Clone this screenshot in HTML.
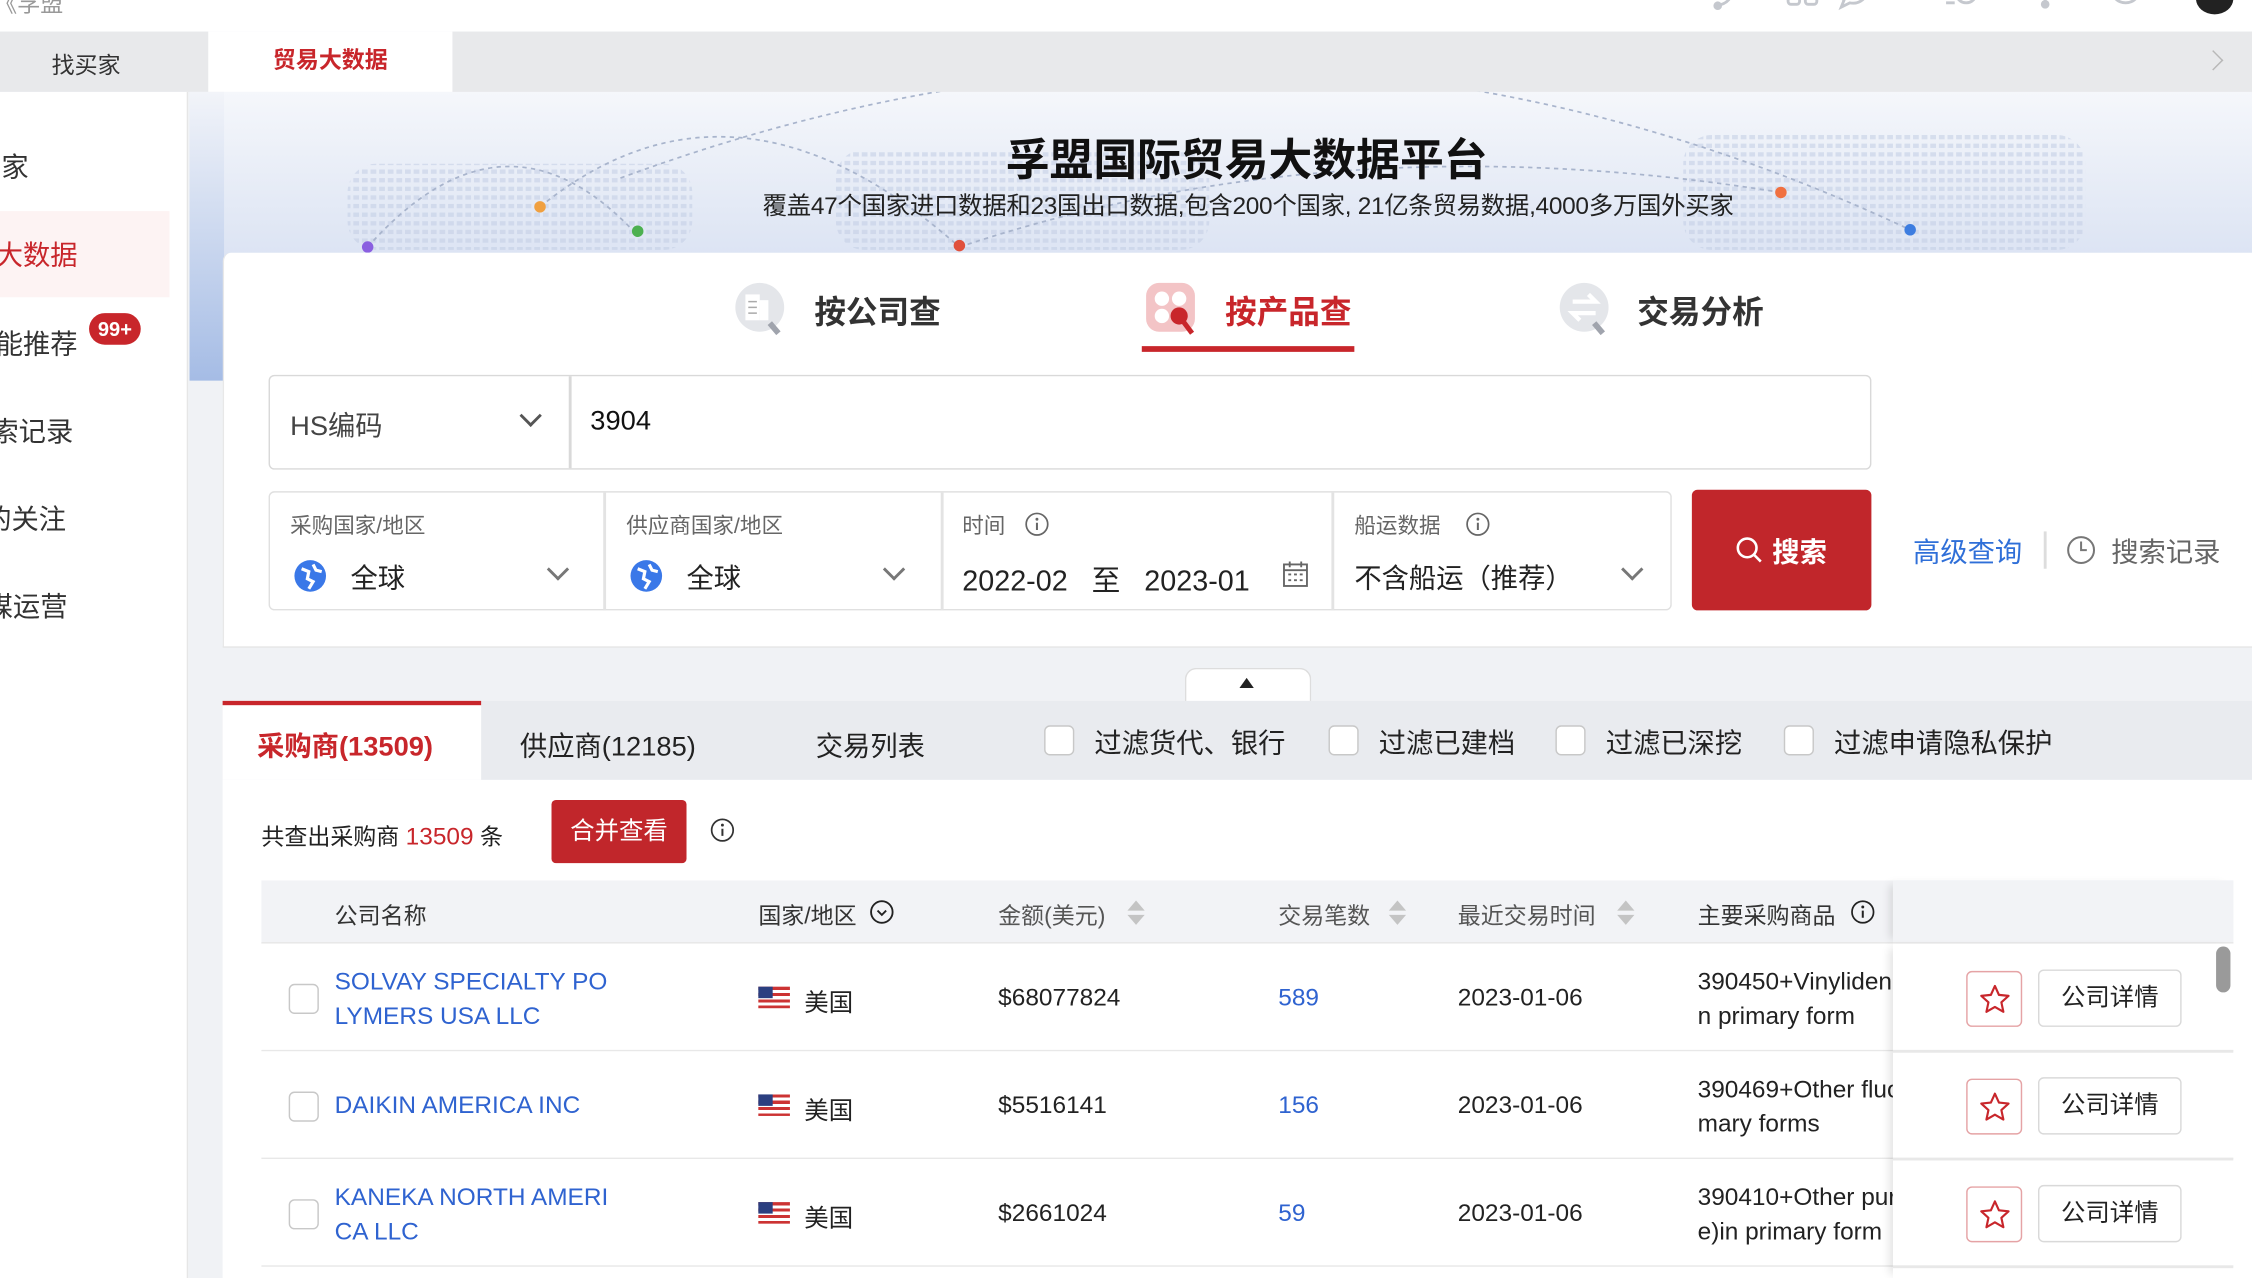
<!DOCTYPE html>
<html><head><meta charset="utf-8">
<style>
*{margin:0;padding:0;box-sizing:border-box}
html,body{width:2252px;height:1278px;overflow:hidden;background:#fff}
#s{position:absolute;left:0;top:0;width:1568px;height:890px;transform:scale(1.43622);transform-origin:0 0;font-family:"Liberation Sans","Noto Sans CJK SC",sans-serif;color:#222;overflow:hidden;background:#f0f2f5}
.a{position:absolute;white-space:nowrap}
.chk{position:absolute;width:21px;height:21px;border:1.5px solid #c8c8c8;border-radius:4px;background:#fff}
.lbl{font-size:15px;color:#666}
.val{font-size:19px;color:#222}
.chev{position:absolute;width:11px;height:11px;border-right:2px solid #555;border-bottom:2px solid #555;transform:rotate(45deg)}
.th{font-size:16px;color:#333;top:626px}
.sort{position:absolute;width:0;height:0;border-left:6px solid transparent;border-right:6px solid transparent}
.row{position:absolute;left:182px;width:1373px;height:75px;background:#fff;border-bottom:1.5px solid #e8e8e8}
.td{font-size:17px;color:#222}
.blue{color:#2f63d0}
.star{position:absolute;width:39px;height:39px;border:1.5px solid #e5a3a5;border-radius:4px;background:#fff}
.det{position:absolute;width:100px;height:40px;border:1.5px solid #d9d9d9;border-radius:4px;background:#fff;font-size:17px;text-align:center;line-height:37px;color:#222}
.flag{position:absolute;width:22px;height:15px;background:repeating-linear-gradient(#c33 0 2.2px,#fff 2.2px 4.4px)}
.flag:before{content:"";position:absolute;left:0;top:0;width:10px;height:8px;background:#2b3f80}
.sb{font-size:19px;color:#333;position:absolute;white-space:nowrap}
</style></head><body><div id="s">

<!-- top bar -->
<div class="a" style="left:0;top:0;width:1568px;height:22px;background:#fff"></div>
<div class="a" style="left:-4px;top:-11px;font-size:16px;color:#999">《孚盟</div>
<svg class="a" style="left:1190px;top:-8px" width="370" height="20" fill="none" stroke="#c5c8ce" stroke-width="2">
<path d="M15 0 q2 10 -10 12"/><circle cx="6" cy="12" r="2" fill="#c5c8ce"/>
<rect x="55" y="-4" width="8" height="15" rx="2"/><rect x="67" y="-4" width="8" height="15" rx="2"/>
<path d="M110 0 a10 9 0 1 0 -16 8 l-2 5 l6 -3 a10 9 0 0 0 12 -10"/>
<path d="M165 10 h6 M172 3 a7 7 0 1 0 14 0"/>
<path d="M225 5 h18 M234 5 v4"/><circle cx="234" cy="11" r="2" fill="#c5c8ce"/>
<circle cx="290" cy="0" r="10"/><path d="M290 0 v6"/>
</svg>
<div class="a" style="left:1529px;top:-12px;width:26px;height:22px;border-radius:50%;background:#222"></div>

<!-- tab bar -->
<div class="a" style="left:0;top:22px;width:1568px;height:42px;background:#e8e9eb"></div>
<div class="a" style="left:0;top:32px;width:120px;text-align:center;font-size:16px;color:#333">找买家</div>
<div class="a" style="left:145px;top:22px;width:170px;height:42px;background:#fff;text-align:center;line-height:42px;font-size:16px;font-weight:bold;color:#c8262b">贸易大数据</div>
<div class="a" style="left:1536px;top:37px;width:10px;height:10px;border-right:1.5px solid #b8b8b8;border-top:1.5px solid #b8b8b8;transform:rotate(45deg)"></div>

<!-- sidebar -->
<div class="a" style="left:0;top:64px;width:131px;height:826px;background:#fff;border-right:1.5px solid #e6e6e6"></div>
<div class="a" style="left:0;top:147px;width:118px;height:60px;background:#fdf3f3"></div>
<div class="sb" style="left:-37px;top:102px">找买家</div>
<div class="sb" style="left:-41px;top:163px;color:#c8262b">贸易大数据</div>
<div class="sb" style="left:-22px;top:225px">智能推荐</div>
<div class="a" style="left:62px;top:218px;width:36px;height:22px;border-radius:11px;background:#c8262b;color:#fff;font-size:14px;font-weight:bold;text-align:center;line-height:22px">99+</div>
<div class="sb" style="left:-25px;top:286px">搜索记录</div>
<div class="sb" style="left:-30px;top:347px">我的关注</div>
<div class="sb" style="left:-29px;top:408px">社媒运营</div>

<!-- banner -->
<div class="a" style="left:132px;top:64px;width:1436px;height:201px;background:linear-gradient(180deg,#f5f7fb 0%,#dfe6f4 50%,#c9d6ef 100%)"></div>
<div class="a" style="left:132px;top:64px;width:24px;height:201px;background:linear-gradient(180deg,#f2f4f9,#a5bce5)"></div>
<svg class="a" style="left:132px;top:64px" width="1436" height="112" fill="none">
<defs><pattern id="dp" width="6" height="6" patternUnits="userSpaceOnUse"><rect width="4" height="3" fill="#c2cde4"/></pattern></defs>
<g fill="url(#dp)" opacity=".55"><rect x="110" y="50" width="240" height="60" rx="20"/><rect x="450" y="40" width="260" height="70" rx="20"/><rect x="1040" y="30" width="280" height="80" rx="20"/></g>
<path d="M124 108 Q220 0 312 100" stroke="#a8b4cc" stroke-width="1.2" stroke-dasharray="3 3"/>
<path d="M244 80 Q380 -30 536 108" stroke="#a8b4cc" stroke-width="1.2" stroke-dasharray="3 3"/>
<path d="M300 60 Q760 -110 1198 96" stroke="#a8b4cc" stroke-width="1.2" stroke-dasharray="3 3"/>
<path d="M536 108 Q800 20 1108 70" stroke="#a8b4cc" stroke-width="1.2" stroke-dasharray="3 3"/>
<circle cx="244" cy="80" r="4" fill="#f0a040"/><circle cx="312" cy="97" r="4" fill="#4cb050"/><circle cx="124" cy="108" r="4" fill="#8a5fe0"/>
<circle cx="536" cy="107" r="4" fill="#e0503c"/><circle cx="1108" cy="70" r="4" fill="#f07040"/><circle cx="1198" cy="96" r="4" fill="#3d7de0"/>
</svg>
<div class="a" style="left:0;width:1736px;top:87px;text-align:center;font-size:30.5px;font-weight:bold;color:#111">孚盟国际贸易大数据平台</div>
<div class="a" style="left:0;width:1738px;top:129px;text-align:center;font-size:17px;color:#222;letter-spacing:-0.2px">覆盖47个国家进口数据和23国出口数据,包含200个国家, 21亿条贸易数据,4000多万国外买家</div>

<!-- search card -->
<div class="a" style="left:155px;top:176px;width:1420px;height:275px;background:#fff;border-radius:6px 0 0 0;border-bottom:1.5px solid #e3e3e3;border-left:1.5px solid #e8e8e8"></div>
<svg class="a" style="left:510px;top:195px" width="42" height="42"><circle cx="19" cy="19" r="17" fill="#e4e6ea"/><path d="M26 30 l6 7" stroke="#a0a4ad" stroke-width="4"/><rect x="9" y="10" width="10" height="18" fill="#fff"/><rect x="19" y="14" width="6" height="14" fill="#fff"/><path d="M11 15h6M11 19h6M11 23h6" stroke="#aaa"/></svg>
<div class="a" style="left:567px;top:200px;font-size:22px;font-weight:bold;color:#333">按公司查</div>
<svg class="a" style="left:796px;top:195px" width="42" height="42"><rect x="2" y="2" width="34" height="34" rx="9" fill="#f3c4c6"/><circle cx="13" cy="13" r="5" fill="#fff"/><circle cx="25" cy="13" r="5" fill="#fff"/><circle cx="13" cy="25" r="5" fill="#fff"/><circle cx="25" cy="25" r="6" fill="#c8262b"/><path d="M28 29 l6 8" stroke="#c8262b" stroke-width="3.5"/></svg>
<div class="a" style="left:853px;top:200px;font-size:22px;font-weight:bold;color:#c8262b">按产品查</div>
<div class="a" style="left:795px;top:241px;width:148px;height:4px;background:#c8262b"></div>
<svg class="a" style="left:1084px;top:195px" width="42" height="42"><circle cx="19" cy="19" r="17" fill="#e4e6ea"/><path d="M26 30 l6 7" stroke="#a0a4ad" stroke-width="4"/><path d="M11 15 h16 l-5 -5 M27 23 h-16 l5 5" stroke="#fff" stroke-width="3" fill="none"/></svg>
<div class="a" style="left:1140px;top:200px;font-size:22px;font-weight:bold;color:#333">交易分析</div>

<!-- hs input -->
<div class="a" style="left:187px;top:261px;width:1116px;height:66px;border:1.5px solid #d9d9d9;border-radius:4px;background:#fff"></div>
<div class="a" style="left:396px;top:262px;width:1.5px;height:64px;background:#d9d9d9"></div>
<div class="a" style="left:202px;top:282px;font-size:19px;color:#444">HS编码</div>
<div class="chev" style="left:364px;top:284px"></div>
<div class="a" style="left:411px;top:283px;font-size:19px;color:#111">3904</div>

<!-- filter box -->
<div class="a" style="left:187px;top:342px;width:977px;height:83px;border:1.5px solid #e0e0e0;border-radius:4px;background:#fff"></div>
<div class="a" style="left:420px;top:343px;width:1.5px;height:82px;background:#e3e3e3"></div>
<div class="a" style="left:655px;top:343px;width:1.5px;height:82px;background:#e3e3e3"></div>
<div class="a" style="left:927px;top:343px;width:1.5px;height:82px;background:#e3e3e3"></div>
<div class="a lbl" style="left:202px;top:355px">采购国家/地区</div>
<div class="a lbl" style="left:436px;top:355px">供应商国家/地区</div>
<div class="a lbl" style="left:670px;top:355px">时间</div>
<div class="a lbl" style="left:943px;top:355px">船运数据</div>
<svg class="a" style="left:713px;top:356px" width="18" height="18"><circle cx="9" cy="9" r="7.5" fill="none" stroke="#666" stroke-width="1.2"/><path d="M9 8v5" stroke="#666" stroke-width="1.4"/><circle cx="9" cy="5.5" r="1" fill="#666"/></svg>
<svg class="a" style="left:1020px;top:356px" width="18" height="18"><circle cx="9" cy="9" r="7.5" fill="none" stroke="#666" stroke-width="1.2"/><path d="M9 8v5" stroke="#666" stroke-width="1.4"/><circle cx="9" cy="5.5" r="1" fill="#666"/></svg>
<svg class="a" style="left:204px;top:389px" width="24" height="24"><circle cx="12" cy="12" r="11" fill="#3a78e8"/><path d="M6 7 l5 2 l-1 5 l4 2 l-3 5 M14 4 l2 4 l4 1" stroke="#fff" stroke-width="2.2" fill="none"/></svg>
<svg class="a" style="left:438px;top:389px" width="24" height="24"><circle cx="12" cy="12" r="11" fill="#3a78e8"/><path d="M6 7 l5 2 l-1 5 l4 2 l-3 5 M14 4 l2 4 l4 1" stroke="#fff" stroke-width="2.2" fill="none"/></svg>
<div class="a val" style="left:244px;top:388px">全球</div>
<div class="a val" style="left:478px;top:388px">全球</div>
<div class="chev" style="left:383px;top:391px;border-color:#777"></div>
<div class="chev" style="left:617px;top:391px;border-color:#777"></div>
<div class="a val" style="left:670px;top:388px;font-size:20px">2022-02 &nbsp; 至 &nbsp; 2023-01</div>
<svg class="a" style="left:892px;top:390px" width="20" height="20" fill="none" stroke="#666" stroke-width="1.3"><rect x="2" y="3" width="16" height="15"/><path d="M6 1v4M14 1v4M2 7h16"/><path d="M5 10h2M9 10h2M13 10h2M5 14h2M9 14h2M13 14h2"/></svg>
<div class="a val" style="left:943px;top:388px">不含船运（推荐）</div>
<div class="chev" style="left:1131px;top:391px;border-color:#777"></div>

<!-- search button -->
<div class="a" style="left:1178px;top:341px;width:125px;height:84px;background:#c1262b;border-radius:4px"></div>
<svg class="a" style="left:1208px;top:373px" width="20" height="20" fill="none" stroke="#fff" stroke-width="1.8"><circle cx="8.5" cy="8.5" r="6.5"/><path d="M13 13l5 5"/></svg>
<div class="a" style="left:1234px;top:370px;font-size:19px;font-weight:bold;color:#fff">搜索</div>
<div class="a" style="left:1332px;top:370px;font-size:19px;color:#2f6fd8">高级查询</div>
<div class="a" style="left:1423px;top:370px;width:1.5px;height:26px;background:#ddd"></div>
<svg class="a" style="left:1438px;top:372px" width="22" height="22" fill="none" stroke="#777" stroke-width="1.4"><circle cx="11" cy="11" r="9"/><path d="M11 5v6h4"/></svg>
<div class="a" style="left:1470px;top:370px;font-size:19px;color:#666">搜索记录</div>

<!-- collapse -->
<div class="a" style="left:825px;top:465px;width:88px;height:24px;background:#fff;border:1.5px solid #ddd;border-bottom:none;border-radius:8px 8px 0 0"></div>
<div class="a" style="left:863px;top:472px;width:0;height:0;border-left:5px solid transparent;border-right:5px solid transparent;border-bottom:7px solid #222"></div>

<!-- results tabs -->
<div class="a" style="left:155px;top:488px;width:1413px;height:55px;background:#e9ebef"></div>
<div class="a" style="left:155px;top:488px;width:180px;height:55px;background:#fff;border-top:3px solid #c8262b"></div>
<div class="a" style="left:179px;top:505px;font-size:19px;font-weight:bold;color:#c8262b">采购商(13509)</div>
<div class="a" style="left:362px;top:505px;font-size:19px;color:#222">供应商(12185)</div>
<div class="a" style="left:568px;top:505px;font-size:19px;color:#222">交易列表</div>
<div class="chk" style="left:727px;top:505px"></div><div class="a" style="left:762px;top:503px;font-size:19px">过滤货代、银行</div>
<div class="chk" style="left:925px;top:505px"></div><div class="a" style="left:960px;top:503px;font-size:19px">过滤已建档</div>
<div class="chk" style="left:1083px;top:505px"></div><div class="a" style="left:1118px;top:503px;font-size:19px">过滤已深挖</div>
<div class="chk" style="left:1242px;top:505px"></div><div class="a" style="left:1277px;top:503px;font-size:19px">过滤申请隐私保护</div>

<!-- results -->
<div class="a" style="left:155px;top:543px;width:1413px;height:347px;background:#fff"></div>
<div class="a" style="left:182px;top:569px;font-size:16px;color:#222">共查出采购商 <span style="color:#c8262b;font-size:17px">13509</span> 条</div>
<div class="a" style="left:384px;top:557px;width:94px;height:44px;background:#c1262b;border-radius:3px;color:#fff;font-size:17px;text-align:center;line-height:44px">合并查看</div>
<svg class="a" style="left:494px;top:569px" width="18" height="18"><circle cx="9" cy="9" r="7.5" fill="none" stroke="#333" stroke-width="1.2"/><path d="M9 8v5" stroke="#333" stroke-width="1.4"/><circle cx="9" cy="5.5" r="1" fill="#333"/></svg>

<div class="a" style="left:182px;top:613px;width:1373px;height:44px;background:#f2f3f6;border-bottom:1.5px solid #e6e6e6"></div>
<div class="a th" style="left:233px;top:624px">公司名称</div>
<div class="a th" style="left:528px;top:624px">国家/地区</div>
<svg class="a" style="left:605px;top:626px" width="18" height="18" fill="none" stroke="#222" stroke-width="1.3"><circle cx="9" cy="9" r="7.5"/><path d="M6 8l3 3 3-3"/></svg>
<div class="a th" style="left:695px;top:624px;color:#555">金额(美元)</div>
<div class="sort" style="left:785px;top:627px;border-bottom:7px solid #c4c4c4"></div><div class="sort" style="left:785px;top:637px;border-top:7px solid #c4c4c4"></div>
<div class="a th" style="left:890px;top:624px;color:#555">交易笔数</div>
<div class="sort" style="left:967px;top:627px;border-bottom:7px solid #c4c4c4"></div><div class="sort" style="left:967px;top:637px;border-top:7px solid #c4c4c4"></div>
<div class="a th" style="left:1015px;top:624px;color:#555">最近交易时间</div>
<div class="sort" style="left:1126px;top:627px;border-bottom:7px solid #c4c4c4"></div><div class="sort" style="left:1126px;top:637px;border-top:7px solid #c4c4c4"></div>
<div class="a th" style="left:1182px;top:624px">主要采购商品</div>
<svg class="a" style="left:1288px;top:626px" width="18" height="18"><circle cx="9" cy="9" r="7.5" fill="none" stroke="#222" stroke-width="1.2"/><path d="M9 8v5" stroke="#222" stroke-width="1.4"/><circle cx="9" cy="5.5" r="1" fill="#222"/></svg>

<div class="row" style="top:657px"></div>
<div class="row" style="top:732px"></div>
<div class="row" style="top:807px"></div>

<div class="chk" style="left:201px;top:685px"></div>
<div class="a td blue" style="left:233px;top:672px;line-height:24px">SOLVAY SPECIALTY PO<br>LYMERS USA LLC</div>
<div class="flag" style="left:528px;top:687px"></div><div class="a td" style="left:560px;top:684px">美国</div>
<div class="a td" style="left:695px;top:685px">$68077824</div>
<div class="a td blue" style="left:890px;top:685px">589</div>
<div class="a td" style="left:1015px;top:685px">2023-01-06</div>
<div class="a td" style="left:1182px;top:672px;line-height:24px;width:136px;overflow:hidden">390450+Vinylidene<br>n primary form</div>

<div class="chk" style="left:201px;top:760px"></div>
<div class="a td blue" style="left:233px;top:760px">DAIKIN AMERICA INC</div>
<div class="flag" style="left:528px;top:762px"></div><div class="a td" style="left:560px;top:759px">美国</div>
<div class="a td" style="left:695px;top:760px">$5516141</div>
<div class="a td blue" style="left:890px;top:760px">156</div>
<div class="a td" style="left:1015px;top:760px">2023-01-06</div>
<div class="a td" style="left:1182px;top:747px;line-height:24px;width:136px;overflow:hidden">390469+Other fluor<br>mary forms</div>

<div class="chk" style="left:201px;top:835px"></div>
<div class="a td blue" style="left:233px;top:822px;line-height:24px">KANEKA NORTH AMERI<br>CA LLC</div>
<div class="flag" style="left:528px;top:837px"></div><div class="a td" style="left:560px;top:834px">美国</div>
<div class="a td" style="left:695px;top:835px">$2661024</div>
<div class="a td blue" style="left:890px;top:835px">59</div>
<div class="a td" style="left:1015px;top:835px">2023-01-06</div>
<div class="a td" style="left:1182px;top:822px;line-height:24px;width:136px;overflow:hidden">390410+Other pur<br>e)in primary form</div>

<!-- fixed right column -->
<div class="a" style="left:1318px;top:613px;width:237px;height:44px;background:#f2f3f6;box-shadow:-5px 0 6px -3px rgba(0,0,0,.12);border-bottom:1.5px solid #e6e6e6"></div>
<div class="a" style="left:1318px;top:657px;width:237px;height:233px;background:#fff;box-shadow:-5px 0 6px -3px rgba(0,0,0,.12)"></div>
<div class="a" style="left:1318px;top:731px;width:237px;height:1.5px;background:#e8e8e8"></div>
<div class="a" style="left:1318px;top:806px;width:237px;height:1.5px;background:#e8e8e8"></div>
<div class="a" style="left:1318px;top:881px;width:237px;height:1.5px;background:#e8e8e8"></div>
<svg width="0" height="0" style="position:absolute"><defs><path id="st" d="M12 2.5l2.8 6.2 6.7.7-5 4.5 1.4 6.6L12 17.1l-5.9 3.4 1.4-6.6-5-4.5 6.7-.7z" fill="none" stroke="#c8262b" stroke-width="1.5" stroke-linejoin="round"/></defs></svg>
<div class="star" style="left:1369px;top:676px"><svg width="36" height="36" style="margin:1px"><g transform="translate(6,6)"><use href="#st"/></g></svg></div>
<div class="star" style="left:1369px;top:751px"><svg width="36" height="36" style="margin:1px"><g transform="translate(6,6)"><use href="#st"/></g></svg></div>
<div class="star" style="left:1369px;top:826px"><svg width="36" height="36" style="margin:1px"><g transform="translate(6,6)"><use href="#st"/></g></svg></div>
<div class="det" style="left:1419px;top:675px">公司详情</div>
<div class="det" style="left:1419px;top:750px">公司详情</div>
<div class="det" style="left:1419px;top:825px">公司详情</div>
<div class="a" style="left:1543px;top:659px;width:10px;height:32px;border-radius:5px;background:#9a9a9a"></div>
</div></body></html>
